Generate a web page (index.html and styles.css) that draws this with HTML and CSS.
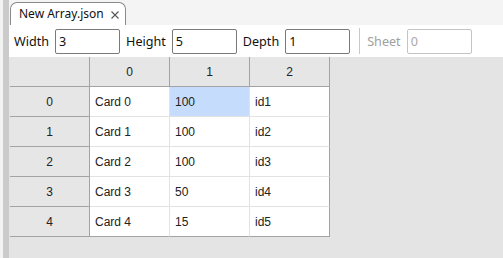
FILE: index.html
```html
<!DOCTYPE html>
<html>
<head>
<meta charset="utf-8">
<link rel="stylesheet" href="styles.css">
</head>
<body>
<div class="app">
  <div class="side"></div>
  <div class="splitter"></div>
  <div class="main">
    <div class="tabstrip">
      <div class="tab">
        <span class="tab-title">New Array.json</span>
        <svg class="close" width="8" height="8" viewBox="0 0 8 8"><path d="M0.5 0.5 L7.5 7.5 M7.5 0.5 L0.5 7.5" stroke="#555" stroke-width="1.1" fill="none"/></svg>
      </div>
    </div>
    <div class="toolbar">
      <span class="label">Width</span>
      <div class="input">3</div>
      <span class="label">Height</span>
      <div class="input">5</div>
      <span class="label">Depth</span>
      <div class="input">1</div>
      <div class="sep"></div>
      <span class="label disabled">Sheet</span>
      <div class="input disabled">0</div>
    </div>
    <div class="gridarea">
      <div class="grid">
        <div class="hc"></div><div class="hc">0</div><div class="hc">1</div><div class="hc">2</div>
        <div class="rh">0</div><div class="dc">Card 0</div><div class="dc sel">100</div><div class="dc last">id1</div>
        <div class="rh">1</div><div class="dc">Card 1</div><div class="dc">100</div><div class="dc last">id2</div>
        <div class="rh">2</div><div class="dc">Card 2</div><div class="dc">100</div><div class="dc last">id3</div>
        <div class="rh">3</div><div class="dc">Card 3</div><div class="dc">50</div><div class="dc last">id4</div>
        <div class="rh">4</div><div class="dc bottom">Card 4</div><div class="dc bottom">15</div><div class="dc last bottom">id5</div>
      </div>
    </div>
  </div>
</div>
</body>
</html>
```
FILE: styles.css
```css
html, body {
  margin: 0;
  padding: 0;
  width: 503px;
  height: 258px;
  overflow: hidden;
  background: #f4f4f4;
}
.app {
  display: flex;
  width: 503px;
  height: 258px;
}
.side {
  width: 3px;
  background: #f3f3f3;
}
.splitter {
  width: 6px;
  background: #cbcbcb;
}
.main {
  flex: 1;
  display: flex;
  flex-direction: column;
  min-width: 0;
}
.tabstrip {
  height: 25px;
  background: #f4f4f4;
  display: flex;
  align-items: flex-end;
  padding-left: 1px;
}
.tab {
  height: 23px;
  box-sizing: border-box;
  border: 1px solid #8a8a8a;
  border-bottom: none;
  border-radius: 7px 7px 0 0;
  background: #fff;
  display: flex;
  align-items: center;
  padding: 0 6px 0 8px;
  font-family: "Noto Sans", sans-serif;
  font-size: 12px;
  color: #111;
  white-space: nowrap;
}
.tab-title {
  margin-top: -1px;
}
.close {
  margin-left: 7px;
  margin-top: 1px;
}
.toolbar {
  height: 32px;
  background: #fff;
  display: flex;
  align-items: center;
  gap: 6px;
  padding: 0 5px;
  font-family: "Noto Sans", sans-serif;
  font-size: 12.6px;
  color: #111;
}
.label.disabled {
  color: #a0a0a0;
}
.input {
  width: 65px;
  height: 25px;
  box-sizing: border-box;
  border: 1px solid #7a7a7a;
  border-radius: 2px;
  padding-left: 3px;
  line-height: 23px;
}
.input.disabled {
  border-color: #c4c4c4;
  color: #a8a8a8;
}
.sep {
  width: 1px;
  height: 26px;
  background: #c8c8c8;
  margin: 0 1px 0 3px;
}
.gridarea {
  flex: 1;
  background: #e4e4e4;
  padding-left: 1px;
}
.grid {
  display: grid;
  grid-template-columns: repeat(4, 80px);
  grid-auto-rows: 30px;
  width: 320px;
  font-family: "Liberation Sans", Arial, sans-serif;
  font-size: 12px;
  color: #222;
}
.grid > div {
  box-sizing: border-box;
  display: flex;
  align-items: center;
}
.hc, .rh {
  background: #e6e6e6;
  border-right: 1px solid #a3a3a3;
  border-bottom: 1px solid #a3a3a3;
  justify-content: center;
}
.dc {
  background: #fff;
  border-right: 1px solid #e2e2e2;
  border-bottom: 1px solid #e2e2e2;
  padding-left: 5px;
}
.dc.sel {
  background: #c6dcfc;
}
.dc.last {
  border-right-color: #a3a3a3;
}
.dc.bottom {
  border-bottom-color: #a3a3a3;
}
```
